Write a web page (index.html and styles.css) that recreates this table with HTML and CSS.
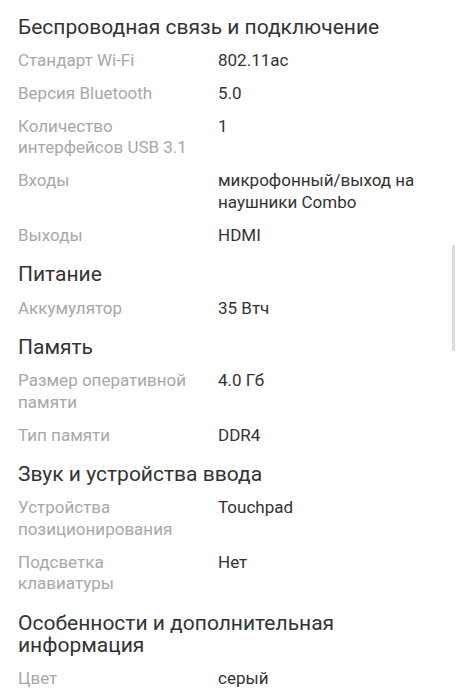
FILE: index.html
```html
<!DOCTYPE html>
<html lang="ru">
<head>
<meta charset="utf-8">
<title>Характеристики</title>
<link rel="stylesheet" href="styles.css">
</head>
<body>
<main class="specs">
  <section class="group">
    <h2 class="group-title">Беспроводная связь и подключение</h2>
    <div class="row"><div class="label">Стандарт Wi-Fi</div><div class="value">802.11ac</div></div>
    <div class="row"><div class="label">Версия Bluetooth</div><div class="value">5.0</div></div>
    <div class="row"><div class="label">Количество интерфейсов USB 3.1</div><div class="value">1</div></div>
    <div class="row"><div class="label">Входы</div><div class="value">микрофонный/выход на наушники Combo</div></div>
    <div class="row"><div class="label">Выходы</div><div class="value">HDMI</div></div>
  </section>
  <section class="group">
    <h2 class="group-title">Питание</h2>
    <div class="row"><div class="label">Аккумулятор</div><div class="value">35 Втч</div></div>
  </section>
  <section class="group">
    <h2 class="group-title">Память</h2>
    <div class="row"><div class="label">Размер оперативной памяти</div><div class="value">4.0 Гб</div></div>
    <div class="row"><div class="label">Тип памяти</div><div class="value">DDR4</div></div>
  </section>
  <section class="group">
    <h2 class="group-title">Звук и устройства ввода</h2>
    <div class="row"><div class="label">Устройства позиционирования</div><div class="value">Touchpad</div></div>
    <div class="row"><div class="label">Подсветка клавиатуры</div><div class="value">Нет</div></div>
  </section>
  <section class="group">
    <h2 class="group-title">Особенности и дополнительная информация</h2>
    <div class="row"><div class="label">Цвет</div><div class="value">серый</div></div>
  </section>
</main>
<div class="scroll-indicator"></div>
</body>
</html>
```

FILE: styles.css
```css
html, body {
  margin: 0;
  padding: 0;
  background: #ffffff;
}

body {
  font-family: Roboto, "Noto Sans", sans-serif;
  color: #333333;
  overflow: hidden;
}

.specs {
  padding: 17px 18px 0 18px;
}

.group + .group {
  margin-top: 18px;
}

.group-title {
  margin: 0;
  font-size: 21px;
  font-weight: 400;
  line-height: 21.8px;
  color: #333333;
  max-width: 380px;
}

.row {
  display: flex;
  margin-top: 11.3px;
  font-size: 17px;
  line-height: 21.6px;
}

.label {
  flex: 0 0 178px;
  margin-right: 22px;
  color: #a8a8a8;
}

.value {
  flex: 1 1 auto;
  color: #333333;
}

.scroll-indicator {
  position: fixed;
  top: 245px;
  right: 4px;
  width: 3px;
  height: 106px;
  background: #dcdcdc;
}
```
